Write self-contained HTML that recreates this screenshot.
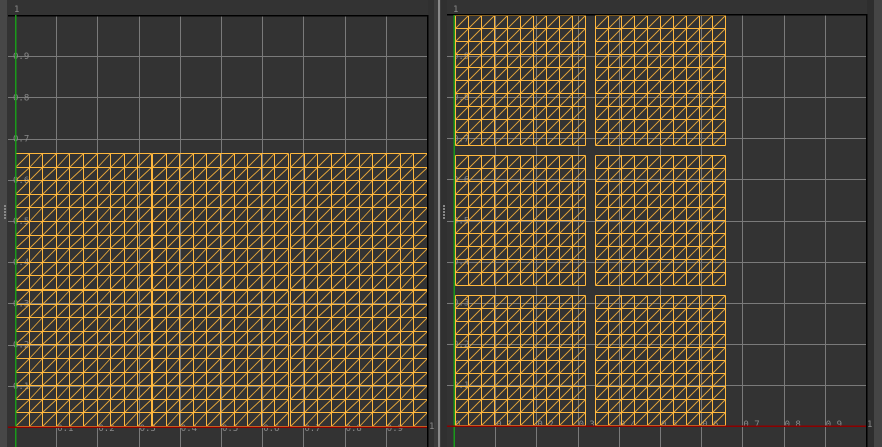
<!DOCTYPE html>
<html><head><meta charset="utf-8"><style>
html,body{margin:0;padding:0;background:#333;width:882px;height:447px;overflow:hidden}
svg{display:block}
text{font-family:"DejaVu Sans Mono","Liberation Mono",monospace;font-size:9px;fill:#8a8a8a}
.c{shape-rendering:crispEdges}
</style></head><body>
<svg id="s" width="882" height="447" xmlns="http://www.w3.org/2000/svg">
<rect width="882" height="447" fill="#333"/>
<rect x="0" y="0" width="7" height="447" fill="#474747"/>
<rect x="428" y="0" width="19" height="447" fill="#303030"/>
<rect x="434" y="0" width="7" height="447" fill="#3c3c3c"/>
<rect x="438" y="0" width="2" height="447" fill="#8a8a8a"/>
<rect x="867" y="0" width="15" height="447" fill="#2e2e2e"/>
<rect x="874" y="0" width="8" height="447" fill="#454545"/>
<g id="g"></g>
</svg>
<script>
var g=document.getElementById('g'),h='';
function R(v){return Math.round(v)+0.5;}
function L(x1,y1,x2,y2,c,w){h+='<line class="c" x1="'+x1+'" y1="'+y1+'" x2="'+x2+'" y2="'+y2+'" stroke="'+c+'" stroke-width="'+(w||1)+'"/>';}
function T(x,y,t){h+='<text x="'+x+'" y="'+y+'">'+t+'</text>';}
function panel(ox,x0,oy,top,right){
 var W=right-ox,H=oy-top;
 for(var i=1;i<10;i++){var x=R(ox+W*i/10),y=R(oy-H*i/10);L(x,top,x,447,'#7a7a7a');L(x0,y,right,y,'#7a7a7a');}
}
function mesh(x,y,w,hh,n){
 var cw=w/n,ch=hh/n,xs=[],ys=[];
 for(var i=0;i<=n;i++){xs.push(R(x+i*cw));ys.push(R(y+i*ch));}
 for(var i=0;i<n;i++)for(var j=0;j<n;j++){h+='<line x1="'+xs[i]+'" y1="'+ys[j+1]+'" x2="'+xs[i+1]+'" y2="'+ys[j]+'" stroke="#e8a83a" stroke-width="0.9"/>';}
 for(var i=0;i<=n;i++){L(xs[i],ys[0],xs[i],ys[n],'#ffb83e');L(xs[0],ys[i],xs[n],ys[i],'#ffb83e');}
}
// left panel
panel(15,8,427,15,427);
for(var i=1;i<10;i++)T(13,427-41.2*i+3,'0.'+i);
T(14,12,'1');
for(var i=1;i<10;i++)T(15+41.2*i+1,431,'0.'+i);
var lx=[[15,136],[152,136],[290,137]],ly=[153,290];
for(var a=0;a<3;a++)for(var b=0;b<2;b++)mesh(lx[a][0],ly[b],lx[a][1],b==0?136:136,10);
L(8,15.5,427.5,15.5,'#000',1.5);L(427.5,15,427.5,447,'#000',1.5);
L(15.5,15,15.5,447,'#1a9a1a',1.5);L(8,427,427,427,'#8b0000',1.5);
T(429,429,'1');
// right panel
panel(454,447,426,15,866);
for(var i=1;i<10;i++)T(453,426-41.1*i+3,'0.'+i);
for(var i=1;i<10;i++)T(454+41.2*i+1,427,'0.'+i);
T(455,427,'0');T(453,12,'1');T(867,427,'1');
var rx=[455,595],ry=[15,155,295];
for(var a=0;a<2;a++)for(var b=0;b<3;b++)mesh(rx[a],ry[b],130,130,10);
L(447,14.5,866.5,14.5,'#000',1.5);L(866.5,14,866.5,447,'#000',1.5);
L(454,15,454,447,'#1a9a1a',1.5);L(447,426,866,426,'#8b0000',1.5);
for(var k=0;k<5;k++){h+='<rect x="4" y="'+(205+k*3)+'" width="2" height="2" fill="#888"/>';h+='<rect x="443" y="'+(205+k*3)+'" width="2" height="2" fill="#888"/>';}
g.innerHTML=h;
</script>
</body></html>
